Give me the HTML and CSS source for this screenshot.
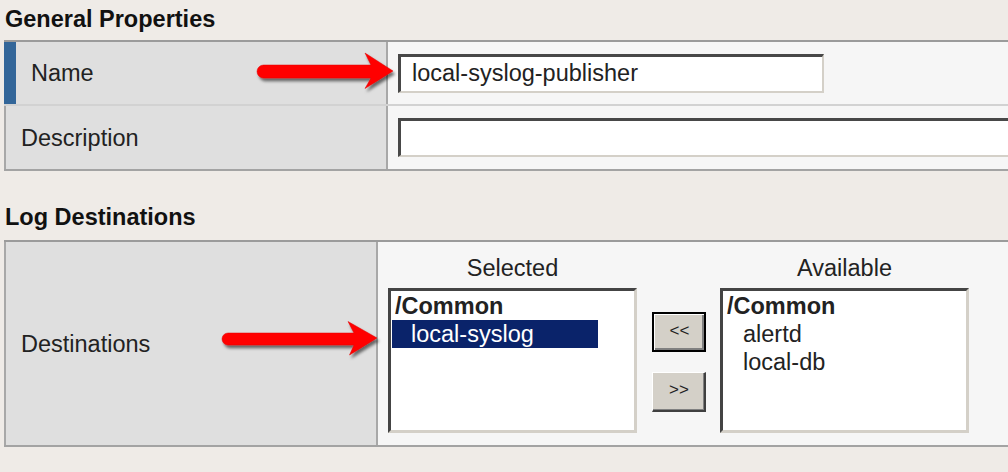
FILE: index.html
```html
<!DOCTYPE html>
<html lang="en">
<head>
<meta charset="utf-8">
<title>Log Publisher</title>
<link rel="stylesheet" href="styles.css">
</head>
<body>
<div class="page">
  <h2 class="section-title">General Properties</h2>
  <div class="form-table">
    <div class="form-row row-name">
      <div class="row-label active">Name</div>
      <div class="row-value">
        <input class="text-input name-input" type="text" value="local-syslog-publisher">
      </div>
    </div>
    <div class="form-row row-desc">
      <div class="row-label">Description</div>
      <div class="row-value">
        <input class="text-input desc-input" type="text" value="">
      </div>
    </div>
  </div>

  <h2 class="section-title second">Log Destinations</h2>
  <div class="form-table narrow">
    <div class="form-row row-dest">
      <div class="row-label">Destinations</div>
      <div class="row-value dest-value">
        <div class="duallist">
          <div class="list-col">
            <div class="list-caption">Selected</div>
            <div class="listbox">
              <div class="list-group">/Common</div>
              <div class="list-item selected">local-syslog</div>
            </div>
          </div>
          <div class="move-buttons">
            <button class="move-btn focused" type="button">&lt;&lt;</button>
            <button class="move-btn" type="button">&gt;&gt;</button>
          </div>
          <div class="list-col">
            <div class="list-caption">Available</div>
            <div class="listbox">
              <div class="list-group">/Common</div>
              <div class="list-item">alertd</div>
              <div class="list-item">local-db</div>
            </div>
          </div>
        </div>
      </div>
    </div>
  </div>
</div>

<svg class="annotations" width="1008" height="472" viewBox="0 0 1008 472" aria-hidden="true">
  <defs>
    <filter id="shadow" x="-10%" y="-30%" width="130%" height="180%">
      <feDropShadow dx="2" dy="3" stdDeviation="1.6" flood-color="#000" flood-opacity="0.55"/>
    </filter>
  </defs>
  <path class="arrow" filter="url(#shadow)" d="M263.5 65 H371 L365 53 L393 71 L365 88.5 L371 78 H263.5 A6.5 6.5 0 0 1 263.5 65 Z"/>
  <path class="arrow" filter="url(#shadow)" d="M228 333 H354 L348 321.5 L377 338 L349.5 355 L354 345 H228 A6 6 0 0 1 228 333 Z"/>
</svg>
</body>
</html>
```

FILE: styles.css
```css
html, body {
  margin: 0;
  padding: 0;
  overflow: hidden;
}

body {
  background: #efebe7;
  font-family: "Liberation Sans", Arial, sans-serif;
  font-size: 23.5px;
  color: #222;
  width: 1008px;
  height: 472px;
  position: relative;
}

.page {
  padding-top: 5px;
}

.section-title {
  margin: 0 0 7px 0;
  padding-left: 5px;
  font-size: 23.5px;
  font-weight: bold;
  line-height: 28px;
  color: #111;
}

.section-title.second {
  margin-bottom: 9px;
}

.form-table {
  margin-left: 4px;
  border-top: 2px solid #9b9b9b;
  border-bottom: 2px solid #a3a3a3;
  margin-bottom: 32px;
}

.form-row {
  display: flex;
}

.form-row + .form-row {
  border-top: 2px solid #d2d2d2;
}

.row-name { height: 62px; }
.row-desc { height: 63px; }
.row-dest { height: 203px; }

.row-label {
  box-sizing: border-box;
  width: 384px;
  flex: none;
  display: flex;
  align-items: center;
  padding-left: 15px;
  background: #dfdfdf;
  border-left: 2px solid #a8a8a8;
  border-right: 2px solid #a8a8a8;
  line-height: 28px;
}

.narrow .row-label {
  width: 374px;
}

.row-label.active {
  border-left: 12px solid #336699;
}

.row-value {
  flex: 1;
  min-width: 0;
  display: flex;
  align-items: center;
  padding-left: 10px;
  background: #f6f6f6;
  overflow: hidden;
}

.text-input {
  box-sizing: border-box;
  flex: none;
  height: 39px;
  margin: 0;
  padding: 0 0 0 11px;
  font-family: "Liberation Sans", Arial, sans-serif;
  font-size: 23.5px;
  color: #222;
  background: #fff;
  border-style: solid;
  border-width: 3px 2px 2px 3px;
  border-color: #484848 #d4d0c8 #d4d0c8 #484848;
  outline: none;
}

.name-input { width: 426px; }
.desc-input { width: calc(100% + 20px); }

.dest-value {
  align-items: flex-start;
  padding-top: 13px;
}

.duallist {
  display: flex;
  align-items: flex-start;
}

.list-col {
  width: 249px;
}

.list-caption {
  text-align: center;
  line-height: 27px;
  margin-bottom: 6px;
}

.listbox {
  box-sizing: border-box;
  height: 145px;
  background: #fff;
  border-style: solid;
  border-width: 3px;
  border-color: #444 #d4d0c8 #d4d0c8 #444;
  padding-top: 1px;
  line-height: 28px;
  white-space: nowrap;
  overflow: hidden;
}

.list-group {
  font-weight: bold;
  padding-left: 4px;
}

.list-item {
  box-sizing: border-box;
  width: 206px;
  margin-left: 1px;
  padding-left: 19px;
}

.list-item.selected {
  background: #0a236a;
  color: #fff;
}

.move-buttons {
  display: flex;
  flex-direction: column;
  gap: 20px;
  margin: 0 14px 0 15px;
  padding-top: 57px;
}

.move-btn {
  box-sizing: border-box;
  width: 54px;
  height: 40px;
  margin: 0;
  padding: 0 0 3px 1px;
  background: #d4d0c8;
  font-family: "Liberation Sans", Arial, sans-serif;
  font-size: 17px;
  letter-spacing: 0;
  color: #222;
  border-style: solid;
  border-width: 1px 2px 2px 1px;
  border-color: #fff #404040 #404040 #fff;
  box-shadow: inset -1px -1px 0 #808080;
}

.move-btn.focused {
  border: 2px solid #000;
  box-shadow: inset 1px 1px 0 #fff, inset -2px -2px 0 #808080;
}

.annotations {
  position: absolute;
  left: 0;
  top: 0;
  pointer-events: none;
}

.arrow {
  fill: #ff0000;
  stroke: #e00000;
  stroke-width: 0.5;
}
```
